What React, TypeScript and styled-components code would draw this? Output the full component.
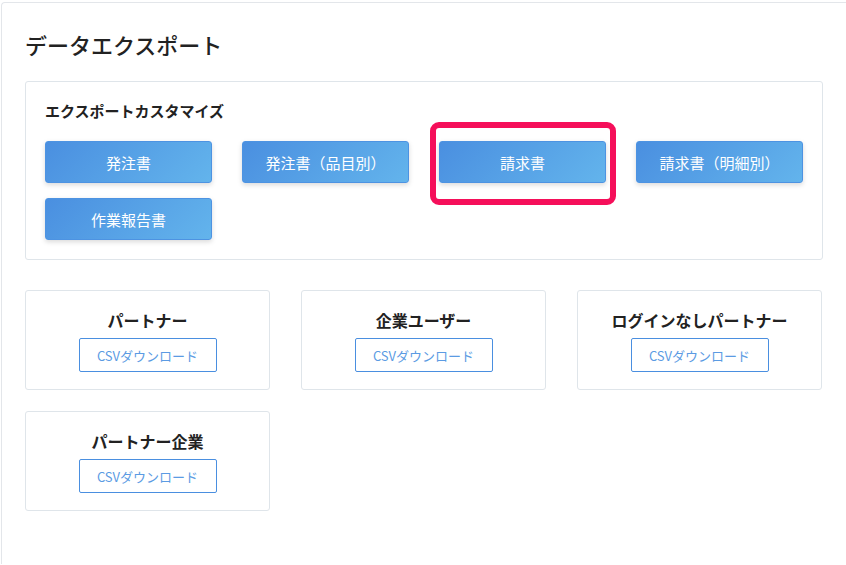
import React from "react";
import styled, { createGlobalStyle } from "styled-components";

const Global = createGlobalStyle`
  html, body { margin: 0; padding: 0; background: #fff; }
  body { font-family: "Noto Sans CJK JP", "Noto Sans", sans-serif; }
`;

const Frame = styled.div`
  margin: 2px 0 0 1px;
  border-top: 1px solid #e3e6ea;
  border-left: 1px solid #e3e6ea;
  border-top-left-radius: 4px;
  height: 562px;
  box-sizing: border-box;
  padding: 24px 23px 0 23px;
`;

const Title = styled.h1`
  margin: 0 0 20px;
  font-size: 22px;
  font-weight: 500;
  color: #222;
  line-height: 34px;
`;

const Card = styled.div`
  border: 1px solid #dfe5ea;
  border-radius: 3px;
  background: #fff;
`;

const CustomCard = styled(Card)`
  padding: 16px 19px 19px;
  margin-bottom: 30px;
`;

const SubTitle = styled.h2`
  margin: 0 0 17px;
  font-size: 15px;
  font-weight: 700;
  color: #222;
  line-height: 26px;
`;

const BtnGrid = styled.div`
  display: grid;
  grid-template-columns: repeat(4, 167px);
  column-gap: 30px;
  row-gap: 15px;
`;

const BtnWrap = styled.div`
  position: relative;
`;

const BlueBtn = styled.button`
  width: 167px;
  height: 42px;
  border: 1px solid #4d93e2;
  border-radius: 3px;
  background: linear-gradient(135deg, #4a8fe0, #63b4ec);
  color: #fff;
  font-family: inherit;
  font-size: 15px;
  box-shadow: 0 2px 5px rgba(0,0,0,0.15);
  display: flex;
  align-items: center;
  justify-content: center;
`;

const Highlight = styled.div`
  position: absolute;
  left: -9px;
  top: -19px;
  width: 174px;
  height: 71px;
  border: 6px solid #f50f5a;
  border-radius: 9px;
  pointer-events: none;
`;

const Grid = styled.div`
  display: grid;
  grid-template-columns: repeat(3, 245px);
  column-gap: 31px;
  row-gap: 21px;
`;

const ExportCard = styled(Card)`
  height: 100px;
  box-sizing: border-box;
  display: flex;
  flex-direction: column;
  align-items: center;
  padding-top: 16px;
`;

const CardTitle = styled.div`
  font-size: 16px;
  font-weight: 700;
  color: #222;
  line-height: 26px;
  margin-bottom: 5px;
`;

const OutlineBtn = styled.button`
  width: 138px;
  height: 34px;
  border: 1px solid #4a8fe0;
  border-radius: 2px;
  background: #fff;
  color: #5b9be3;
  font-family: inherit;
  font-size: 13px;
`;

const custom = ["発注書", "発注書（品目別）", "請求書", "請求書（明細別）", "作業報告書"];
const exports = ["パートナー", "企業ユーザー", "ログインなしパートナー", "パートナー企業"];

export default function App() {
  return (
    <>
      <Global />
      <Frame>
        <Title>データエクスポート</Title>
        <CustomCard>
          <SubTitle>エクスポートカスタマイズ</SubTitle>
          <BtnGrid>
            {custom.map((c) => (
              <BtnWrap key={c}>
                <BlueBtn>{c}</BlueBtn>
                {c === "請求書" && <Highlight />}
              </BtnWrap>
            ))}
          </BtnGrid>
        </CustomCard>
        <Grid>
          {exports.map((e) => (
            <ExportCard key={e}>
              <CardTitle>{e}</CardTitle>
              <OutlineBtn>CSVダウンロード</OutlineBtn>
            </ExportCard>
          ))}
        </Grid>
      </Frame>
    </>
  );
}
